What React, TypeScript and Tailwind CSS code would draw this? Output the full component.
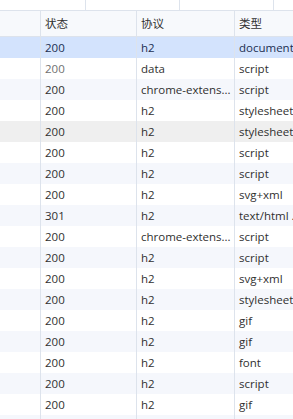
import React from "react";

type Row = { s: string; p: string; t: string; bg: string; sc?: string; tc?: string };

const rows: Row[] = [
  { s: "200", p: "h2", t: "document", bg: "bg-[#d3e3fd]", sc: "text-[#1b2f52]", tc: "text-[#1b2f52]" },
  { s: "200", p: "data", t: "script", bg: "bg-white", sc: "text-[#707070]" },
  { s: "200", p: "chrome-extens...", t: "script", bg: "bg-[#f5f7fc]" },
  { s: "200", p: "h2", t: "stylesheet", bg: "bg-white" },
  { s: "200", p: "h2", t: "stylesheet", bg: "bg-[#efefef]" },
  { s: "200", p: "h2", t: "script", bg: "bg-white" },
  { s: "200", p: "h2", t: "script", bg: "bg-[#f5f7fc]" },
  { s: "200", p: "h2", t: "svg+xml", bg: "bg-white" },
  { s: "301", p: "h2", t: "text/html ...", bg: "bg-[#f5f7fc]" },
  { s: "200", p: "chrome-extens...", t: "script", bg: "bg-white" },
  { s: "200", p: "h2", t: "script", bg: "bg-[#f5f7fc]" },
  { s: "200", p: "h2", t: "svg+xml", bg: "bg-white" },
  { s: "200", p: "h2", t: "stylesheet", bg: "bg-[#f5f7fc]" },
  { s: "200", p: "h2", t: "gif", bg: "bg-white" },
  { s: "200", p: "h2", t: "gif", bg: "bg-[#f5f7fc]" },
  { s: "200", p: "h2", t: "font", bg: "bg-white" },
  { s: "200", p: "h2", t: "script", bg: "bg-[#f5f7fc]" },
  { s: "200", p: "h2", t: "gif", bg: "bg-white" },
  { s: "200", p: "h2", t: "script", bg: "bg-[#f5f7fc]" },
];

export default function App() {
  return (
    <div
      className="w-[293px] h-[419px] overflow-hidden bg-white text-[11.5px] text-[#303030]"
      style={{ fontFamily: '"Open Sans", "Noto Sans CJK SC", sans-serif' }}
    >
      <div className="flex h-[10px]">
        <div className="w-[86px] shrink-0 border-r border-[#dde3ec]" />
        <div className="w-[94px] shrink-0 border-r border-[#dde3ec]" />
        <div className="w-[94px] shrink-0 border-r border-[#dde3ec]" />
        <div className="flex-1" />
      </div>
      <div className="flex h-[27px] bg-[#f7f9fc] border-y border-[#dde3ec] items-center">
        <div className="w-[41px] shrink-0 h-full border-r border-[#dde3ec]" />
        <div className="w-[96px] shrink-0 h-full border-r border-[#dde3ec] pl-[4px] flex items-center">状态</div>
        <div className="w-[98px] shrink-0 h-full border-r border-[#dde3ec] pl-[4px] flex items-center">协议</div>
        <div className="flex-1 h-full pl-[4px] flex items-center whitespace-nowrap">类型</div>
      </div>
      {rows.map((r, i) => (
        <div key={i} className={`flex h-[21px] ${r.bg}`}>
          <div className="w-[41px] shrink-0 h-full border-r border-[#dde3ec]" />
          <div className={`w-[96px] shrink-0 h-full border-r border-[#dde3ec] pl-[4px] flex items-center ${r.sc ?? ""}`}>{r.s}</div>
          <div className={`w-[98px] shrink-0 h-full border-r border-[#dde3ec] pl-[4px] flex items-center whitespace-nowrap overflow-hidden ${r.tc ?? ""}`}>{r.p}</div>
          <div className={`flex-1 h-full pl-[4px] flex items-center whitespace-nowrap overflow-hidden ${r.tc ?? ""}`}>{r.t}</div>
        </div>
      ))}
    </div>
  );
}
